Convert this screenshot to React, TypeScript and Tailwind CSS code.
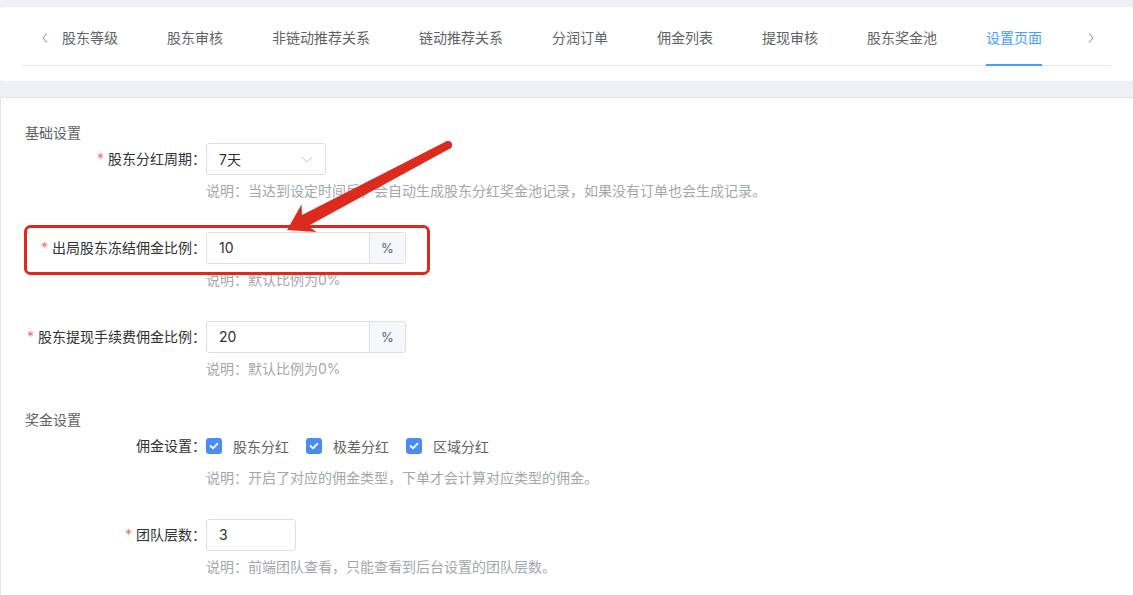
import React from 'react';

const tabs = ['股东等级', '股东审核', '非链动推荐关系', '链动推荐关系', '分润订单', '佣金列表', '提现审核', '股东奖金池', '设置页面'];

function Chevron({ dir }: { dir: 'left' | 'right' }) {
    return (
        <svg width="8" height="12" viewBox="0 0 8 12" fill="none" stroke="#9a9da3" strokeWidth="1.1">
            {dir === 'left' ? <polyline points="6,1.5 2,6 6,10.5" /> : <polyline points="2,1.5 6,6 2,10.5" />}
        </svg>
    );
}

function FormItem({ label, required, help, children }: { label: string; required?: boolean; help?: string; children: React.ReactNode }) {
    return (
        <div className="flex items-start mb-[30px]">
            <div className="w-[181px] shrink-0 text-right h-[32px] leading-[32px] text-[14px] text-[#303133]">
                {required && <span className="text-[#f56c6c] mr-[4px]">*</span>}
                {label}：
            </div>
            <div className="flex flex-col">
                {children}
                {help && <div className="mt-[5px] leading-[22px] text-[14px] text-[#a3a6ad] whitespace-nowrap">{help}</div>}
            </div>
        </div>
    );
}

function AddonInput({ value }: { value: string }) {
    return (
        <div className="flex h-[32px] w-[200px] border border-[#dcdfe6] rounded-[3px] overflow-hidden">
            <div className="flex-1 px-[12px] leading-[30px] text-[14px] text-[#303133]">{value}</div>
            <div className="w-[36px] border-l border-[#dcdfe6] bg-[#f5f7fa] text-center leading-[30px] text-[13px] text-[#606266]">%</div>
        </div>
    );
}

function Check({ label }: { label: string }) {
    return (
        <div className="flex items-center mr-[17px]">
            <span className="w-[16px] h-[16px] rounded-[3px] bg-[#4a8cf7] flex items-center justify-center">
                <svg width="10" height="8" viewBox="0 0 10 8" fill="none" stroke="#fff" strokeWidth="1.8" strokeLinecap="round" strokeLinejoin="round">
                    <polyline points="1.5,4 4,6.3 8.5,1.7" />
                </svg>
            </span>
            <span className="ml-[11px] text-[14px] text-[#606266]">{label}</span>
        </div>
    );
}

export default function App() {
    return (
        <div className="relative h-[595px] overflow-hidden bg-[#eef0f3] pt-[7px] font-['Inter','Noto_Sans_CJK_SC',sans-serif]">
            <div className="bg-white rounded-[4px] pt-[20px] pb-[15px]">
                <div className="mx-[23px] mr-[22px] flex items-start border-b border-[#e4e7ed]">
                    <div className="w-[39px] h-[22px] flex items-center justify-center pl-[4px]">
                        <Chevron dir="left" />
                    </div>
                    <div className="flex gap-[49px] flex-1">
                        {tabs.map((t) => (
                            <div
                                key={t}
                                className={
                                    t === '设置页面'
                                        ? 'leading-[22px] pb-[15px] -mb-px border-b-2 border-[#409eff] text-[14px] text-[#409eff]'
                                        : 'leading-[22px] pb-[15px] -mb-px border-b-2 border-transparent text-[14px] text-[#5f6266]'
                                }
                            >
                                {t}
                            </div>
                        ))}
                    </div>
                    <div className="w-[24px] h-[22px] flex items-center justify-start pr-[4px]">
                        <Chevron dir="right" />
                    </div>
                </div>
            </div>

            <div className="mt-[16px] bg-white border-l border-t border-[#e2e4e8] pt-[25px] pl-[24px] h-full">
                <div className="leading-[20px] text-[14px] text-[#606266]">基础设置</div>
                <FormItem label="股东分红周期" required help="说明：当达到设定时间后，会自动生成股东分红奖金池记录，如果没有订单也会生成记录。">
                    <div className="flex items-center justify-between h-[32px] w-[120px] border border-[#dcdfe6] rounded-[3px] pl-[12px] pr-[12px]">
                        <span className="text-[14px] text-[#303133]">7天</span>
                        <svg width="12" height="7" viewBox="0 0 12 7" fill="none" stroke="#c0c4cc" strokeWidth="1">
                            <polyline points="1,1 6,6 11,1" />
                        </svg>
                    </div>
                </FormItem>
                <FormItem label="出局股东冻结佣金比例" required help="说明：默认比例为0%">
                    <AddonInput value="10" />
                </FormItem>
                <FormItem label="股东提现手续费佣金比例" required help="说明：默认比例为0%">
                    <AddonInput value="20" />
                </FormItem>

                <div className="leading-[20px] text-[14px] text-[#606266]">奖金设置</div>
                <FormItem label="佣金设置" help="说明：开启了对应的佣金类型，下单才会计算对应类型的佣金。">
                    <div className="flex items-center h-[32px]">
                        <Check label="股东分红" />
                        <Check label="极差分红" />
                        <Check label="区域分红" />
                    </div>
                </FormItem>
                <FormItem label="团队层数" required help="说明：前端团队查看，只能查看到后台设置的团队层数。">
                    <div className="h-[32px] w-[90px] border border-[#dcdfe6] rounded-[3px] px-[12px] leading-[30px] text-[14px] text-[#303133]">3</div>
                </FormItem>
            </div>

            <svg className="absolute inset-0 pointer-events-none" width="1133" height="595">
                <rect x="25.5" y="226.5" width="403" height="47" rx="5" fill="none" stroke="#e0291c" strokeWidth="3" />
                <polygon
                    points="287,230 316.5,232 308,226 450,148.5 446,141.5 302,215 301.5,204.5"
                    fill="#dc2a1c"
                />
                <circle cx="448" cy="145" r="4" fill="#dc2a1c" />
            </svg>
        </div>
    );
}
